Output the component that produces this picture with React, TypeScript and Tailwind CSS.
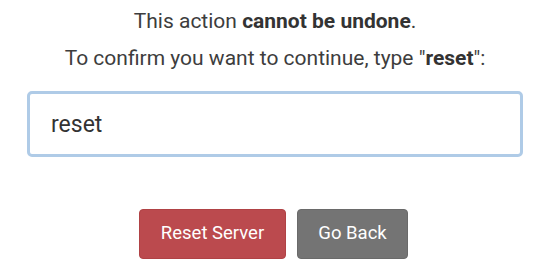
import React from "react";

export default function App() {
  return (
    <div className="w-[550px] h-[279px] bg-white overflow-hidden" style={{ fontFamily: "Roboto, 'Liberation Sans', sans-serif" }}>
      <div className="flex flex-col items-center pt-[7px] px-[27px]">
        <p className="text-[21px] leading-[28px] text-[#3d3d3d] text-center whitespace-nowrap">
          This action <strong className="font-bold text-[#333]">cannot be undone</strong>.
        </p>
        <p className="mt-[9px] text-[21px] leading-[28px] text-[#3d3d3d] text-center whitespace-nowrap">
          To confirm you want to continue, type "<strong className="font-bold text-[#333]">reset</strong>":
        </p>
        <input
          readOnly
          value="reset"
          className="mt-[19px] w-full h-[66px] rounded-[5px] border-[3px] border-[#afcbe7] bg-white pl-[21px] text-[23px] text-[#333] outline-none"
          style={{ fontFamily: "Roboto, 'Liberation Sans', sans-serif" }}
        />
        <div className="mt-[52px] flex gap-[11px] pr-[3px]">
          <button className="h-[50px] w-[147px] rounded-[4px] bg-[#bb4a4e] border border-[#b04245] text-white text-[18.5px]">
            Reset Server
          </button>
          <button className="h-[50px] w-[111px] rounded-[4px] bg-[#747474] border border-[#6a6a6a] text-white text-[18.5px]">
            Go Back
          </button>
        </div>
      </div>
    </div>
  );
}
